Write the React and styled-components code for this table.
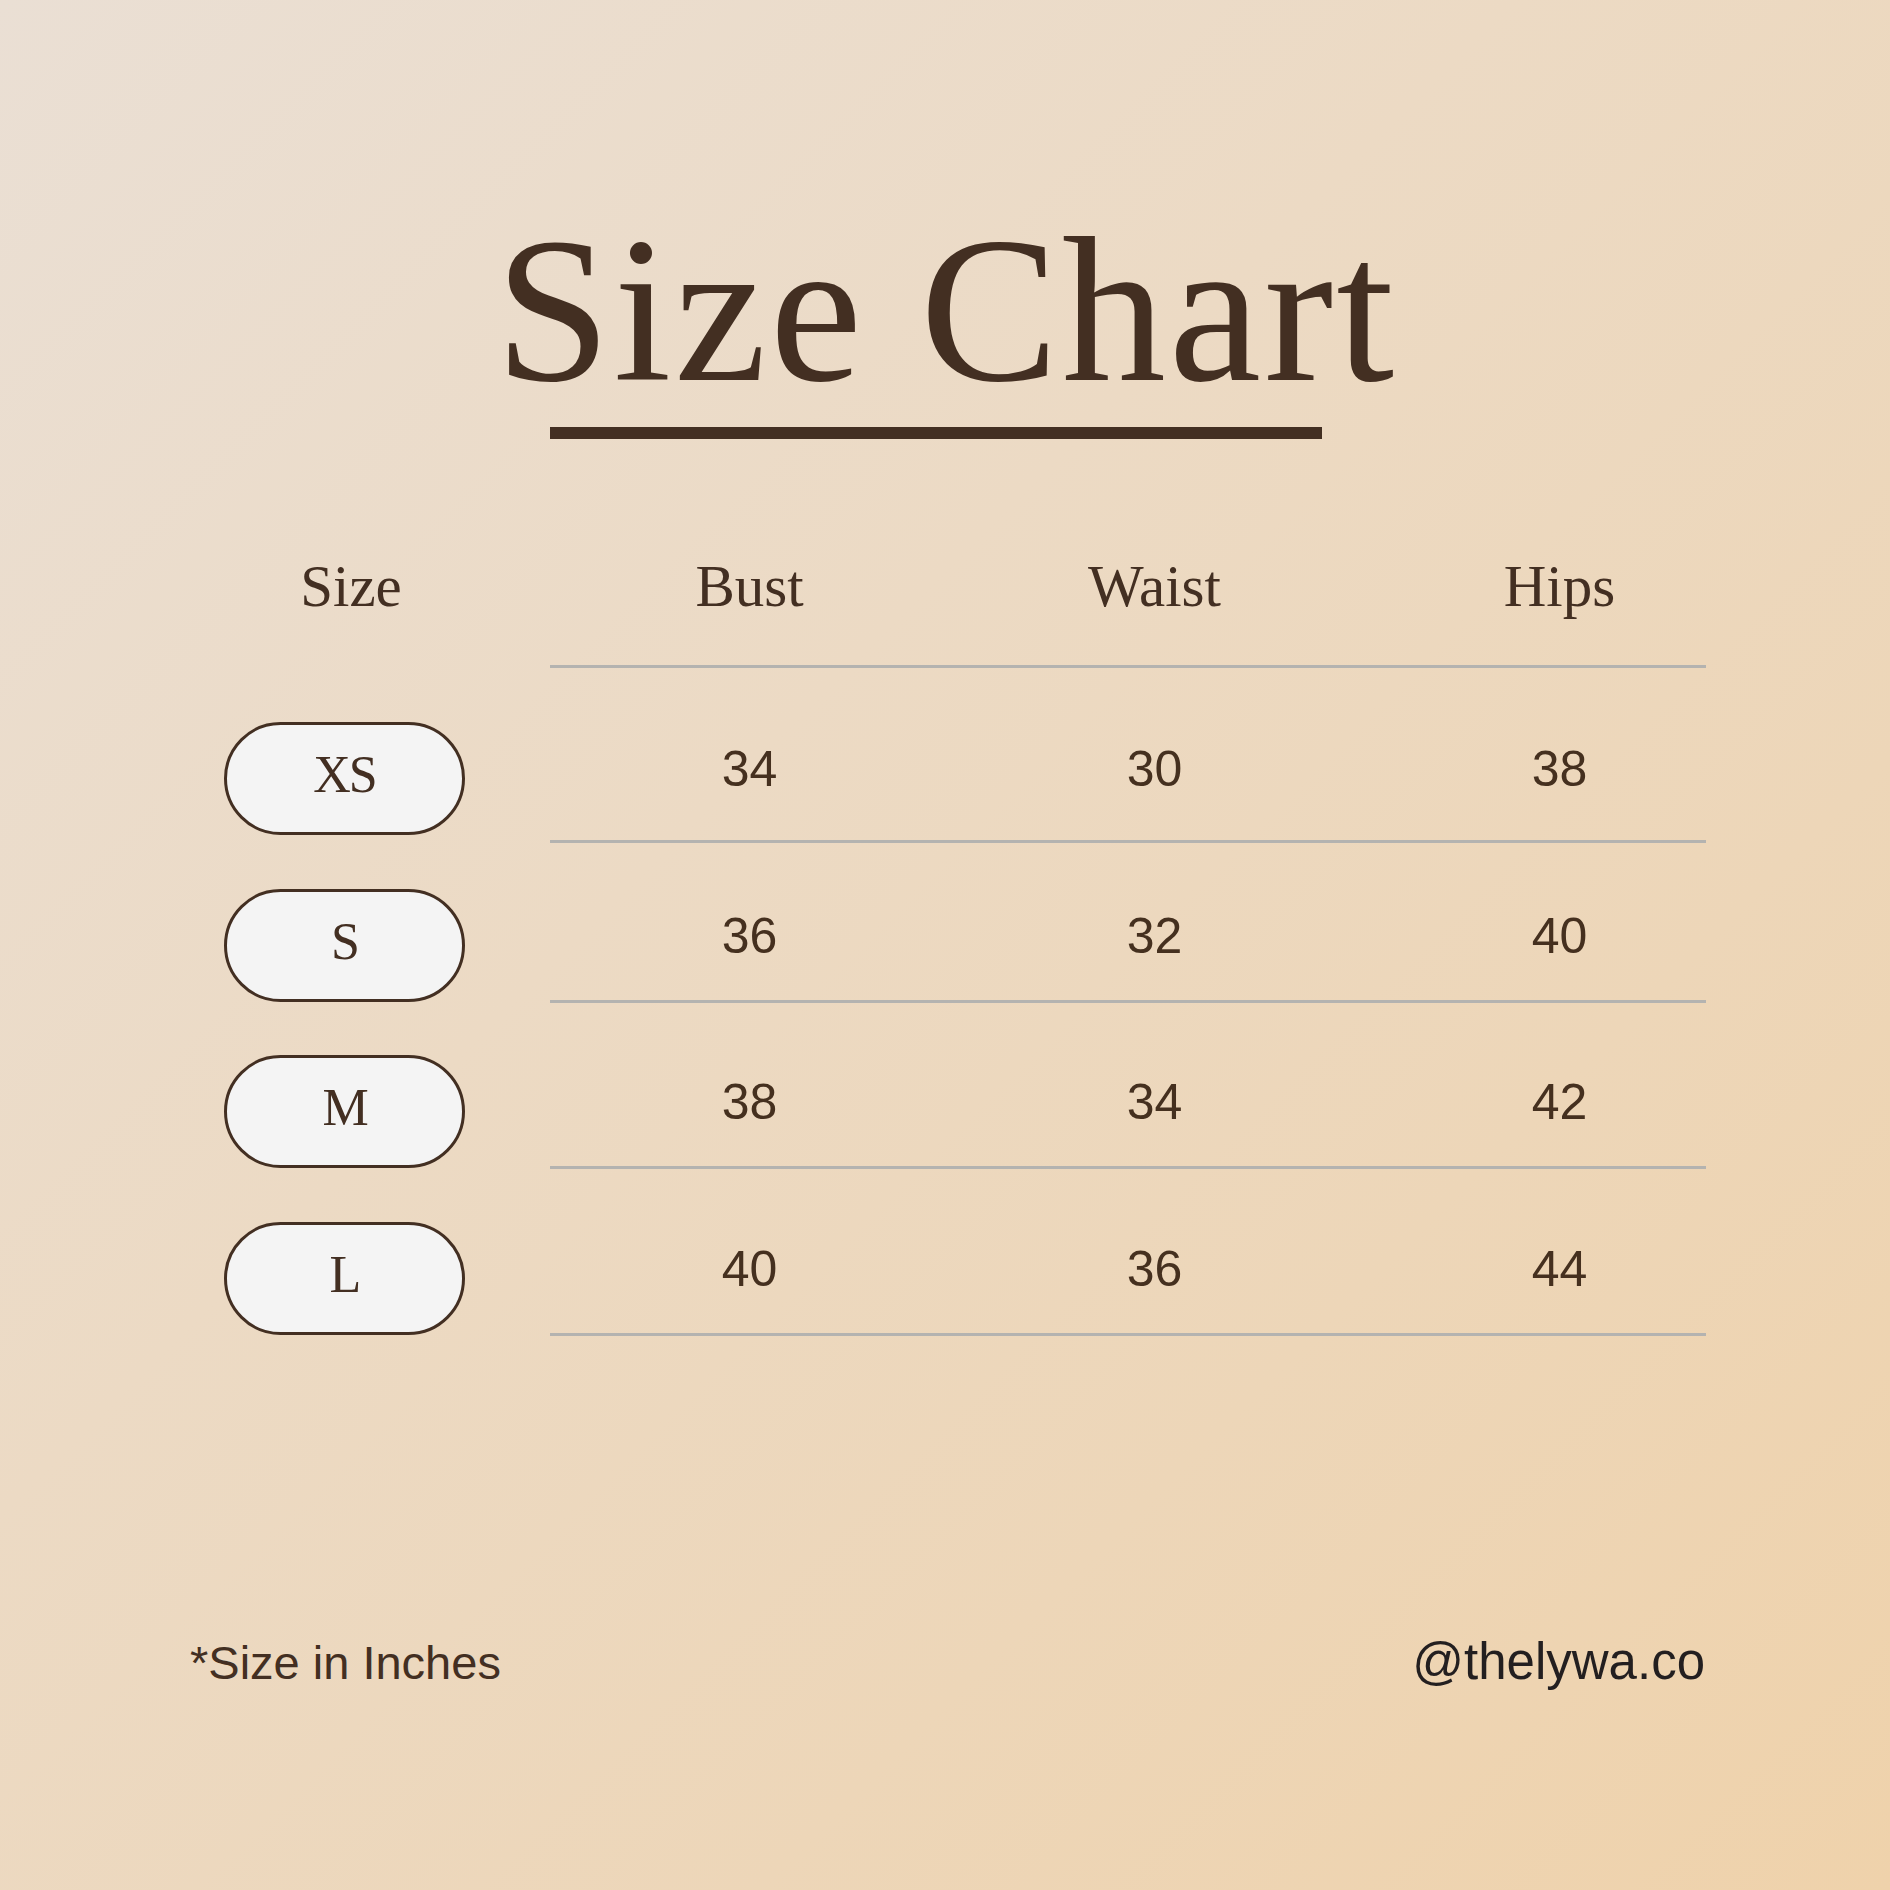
import styled, { createGlobalStyle } from "styled-components"

const GlobalStyle = createGlobalStyle`
    body {
        margin: 0;
    }
    * {
        box-sizing: border-box;
    }
`

const rows = [
    { size: "XS", bust: 34, waist: 30, hips: 38, h: 175, mb: 8 },
    { size: "S", bust: 36, waist: 32, hips: 40, h: 160, mb: 1 },
    { size: "M", bust: 38, waist: 34, hips: 42, h: 166, mb: 1 },
    { size: "L", bust: 40, waist: 36, hips: 44, h: 167, mb: 1 },
]

function App() {
    return (
        <Page>
            <GlobalStyle />
            <TitleBlock>
                <Title>Size Chart</Title>
                <Underline />
            </TitleBlock>

            <Table>
                <HeaderRow>
                    <SizeHead>Size</SizeHead>
                    <Cells>
                        <Head>Bust</Head>
                        <Head>Waist</Head>
                        <Head>Hips</Head>
                    </Cells>
                </HeaderRow>
                {rows.map(r => (
                    <Row key={r.size} h={r.h}>
                        <Pill mb={r.mb}>{r.size}</Pill>
                        <Cells pb={r.mb + 38}>
                            <Value>{r.bust}</Value>
                            <Value>{r.waist}</Value>
                            <Value>{r.hips}</Value>
                        </Cells>
                    </Row>
                ))}
            </Table>

            <Footer>
                <Note>*Size in Inches</Note>
                <Handle>@thelywa.co</Handle>
            </Footer>
        </Page>
    )
}

const Page = styled.div`
    width: 1890px;
    height: 1890px;
    overflow: hidden;
    background: linear-gradient(135deg, #eadfd4 0%, #ecdac4 40%, #edd6b8 70%, #efd2ab 100%);
    color: #432f22;
    display: flex;
    flex-direction: column;
    padding-top: 206px;
`

const TitleBlock = styled.div`
    display: flex;
    flex-direction: column;
    align-items: center;
`

const Title = styled.h1`
    margin: 0;
    margin-left: 2px;
    font-family: "Liberation Serif", "DejaVu Serif", serif;
    font-weight: 400;
    font-size: 208px;
    line-height: 208px;
    letter-spacing: 3px;
    color: #432f22;
`

const Underline = styled.div`
    width: 772px;
    height: 12px;
    margin-top: 13px;
    margin-right: 18px;
    background: #432f22;
`

const Table = styled.div`
    display: flex;
    flex-direction: column;
    margin-top: 118px;
    margin-left: 224px;
`

const HeaderRow = styled.div`
    display: flex;
    height: 111px;
`

const SizeHead = styled.div`
    width: 241px;
    margin-right: 85px;
    padding-left: 13px;
    text-align: center;
    font-family: "Liberation Serif", "DejaVu Serif", serif;
    font-size: 59px;
    line-height: 59px;
`

const Cells = styled.div`
    width: 1156px;
    height: 100%;
    border-bottom: 3px solid #b4b3b0;
    display: grid;
    grid-template-columns: repeat(3, 405px);
    margin-right: -60px;
    align-items: ${p => (p.pb !== undefined ? "end" : "start")};
    padding-bottom: ${p => p.pb || 0}px;
    & > * {
        margin-left: -6px;
    }
`

const Head = styled.div`
    text-align: center;
    font-family: "Liberation Serif", "DejaVu Serif", serif;
    font-size: 59px;
    line-height: 59px;
`

const Row = styled.div`
    display: flex;
    align-items: flex-end;
    height: ${p => p.h}px;
`

const Pill = styled.div`
    width: 241px;
    height: 113px;
    margin-right: 85px;
    margin-bottom: ${p => p.mb}px;
    flex-shrink: 0;
    border: 3px solid #432f22;
    border-radius: 57px;
    background: #f4f4f4;
    display: flex;
    align-items: center;
    justify-content: center;
    padding-bottom: 8px;
    font-family: "Liberation Serif", "DejaVu Serif", serif;
    font-size: 52px;
    line-height: 52px;
    letter-spacing: -2px;
    color: #432f22;
`

const Value = styled.div`
    text-align: center;
    font-family: "Liberation Sans", Arial, sans-serif;
    font-size: 50px;
    line-height: 50px;
    color: #45301f;
`

const Footer = styled.div`
    display: flex;
    justify-content: space-between;
    align-items: baseline;
    width: 1515px;
    margin-left: 190px;
    margin-top: 300px;
    font-family: "Liberation Sans", Arial, sans-serif;
`

const Note = styled.div`
    font-size: 47px;
    line-height: 47px;
    color: #432f22;
`

const Handle = styled.div`
    font-size: 51px;
    line-height: 51px;
    color: #231f20;
`

export default App
